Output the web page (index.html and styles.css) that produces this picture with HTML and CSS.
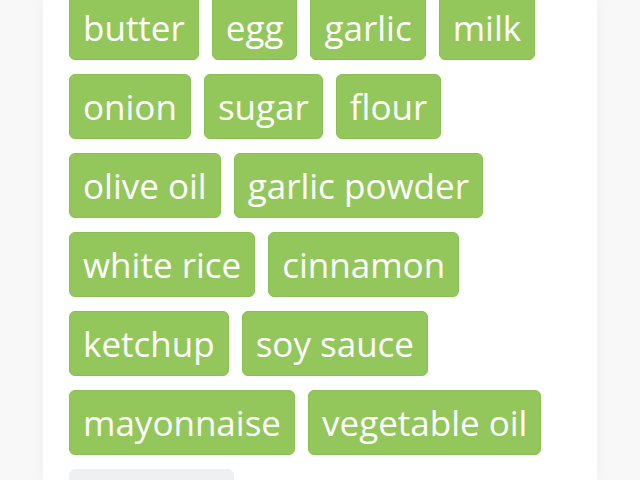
FILE: index.html
```html
<!DOCTYPE html>
<html>
<head>
<meta charset="utf-8">
<link rel="stylesheet" href="styles.css">
</head>
<body>
<div class="page">
  <div class="card">
    <div class="tags">
      <span class="tag">butter</span>
      <span class="tag">egg</span>
      <span class="tag">garlic</span>
      <span class="tag">milk</span>
      <span class="tag">onion</span>
      <span class="tag">sugar</span>
      <span class="tag">flour</span>
      <span class="tag">olive oil</span>
      <span class="tag">garlic powder</span>
      <span class="tag">white rice</span>
      <span class="tag">cinnamon</span>
      <span class="tag">ketchup</span>
      <span class="tag">soy sauce</span>
      <span class="tag">mayonnaise</span>
      <span class="tag">vegetable oil</span>
      <span class="tag tag-muted"></span>
    </div>
  </div>
</div>
</body>
</html>
```
FILE: styles.css
```css
html, body {
  margin: 0;
  padding: 0;
  background: #f8f8f9;
  height: 100%;
  overflow: hidden;
}
.page {
  display: flex;
  justify-content: center;
  height: 100%;
}
.card {
  width: 554px;
  background: #ffffff;
  box-shadow: 0 0 12px rgba(0, 0, 0, 0.05);
  padding: 0 26px;
  box-sizing: border-box;
}
.tags {
  margin-top: -5px;
  display: flex;
  flex-wrap: wrap;
  gap: 14px 13px;
}
.tag {
  display: inline-block;
  background: #93c75b;
  border: 1px solid #8bbf54;
  border-radius: 6px;
  color: #ffffff;
  font-family: "Open Sans", "Noto Sans", sans-serif;
  font-size: 35px;
  line-height: 49px;
  padding: 7px 13px;
  white-space: nowrap;
}
.tag-muted {
  background: #eef0f1;
  border-color: #eef0f1;
  width: 137px;
  height: 49px;
}
```
